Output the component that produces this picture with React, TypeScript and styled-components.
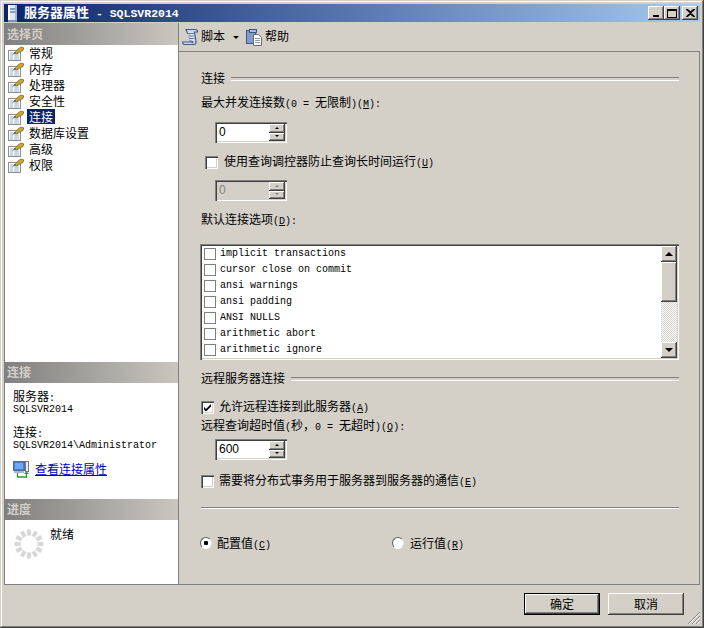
import React from "react";
import styled, { createGlobalStyle } from "styled-components";

const Global = createGlobalStyle`
  html, body { margin: 0; padding: 0; background: #d4d0c8; }
  * { box-sizing: border-box; }
  u { text-decoration: underline; text-underline-offset: 1px; }
`;

const CJK = `"Noto Sans CJK SC", "Liberation Sans", sans-serif`;

const Lat = styled.span`
  font-family: "Liberation Mono", monospace;
  font-size: 10px;
  white-space: pre;
`;

function Mixed({ text }: { text: string }) {
  const runs = text.split(/([\x00-\x7f]+)/).filter(Boolean);
  return (
    <>
      {runs.map((r, i) => {
        if (!/^[\x00-\x7f]+$/.test(r)) return <React.Fragment key={i}>{r}</React.Fragment>;
        const parts = r.split(/\(([A-Z])\)/);
        return (
          <Lat key={i}>
            {parts.map((p, j) =>
              j % 2 ? (
                <React.Fragment key={j}>
                  (<u>{p}</u>)
                </React.Fragment>
              ) : (
                <React.Fragment key={j}>{p}</React.Fragment>
              )
            )}
          </Lat>
        );
      })}
    </>
  );
}

const Window = styled.div`
  position: relative;
  width: 704px;
  height: 628px;
  padding: 4px;
  background: #d4d0c8;
  display: flex;
  flex-direction: column;
  font-family: ${CJK};
  font-size: 12px;
  line-height: 16px;
  color: #000;
  overflow: hidden;
  box-shadow: inset -1px -1px 0 #404040, inset 1px 1px 0 #d4d0c8, inset -2px -2px 0 #808080, inset 2px 2px 0 #fff;
`;

const TitleBar = styled.div`
  height: 18px;
  flex: none;
  margin-bottom: 1px;
  padding: 0 2px 0 3px;
  display: flex;
  align-items: center;
  background: linear-gradient(90deg, #0a246a, #a6caf0);
  color: #fff;
  font-weight: 700;
  font-size: 13px;
`;

const TitleText = styled.span`
  margin-left: 6px;
  flex: 1;
  white-space: pre;
  ${Lat} {
    font-size: 11.5px;
    font-weight: 700;
  }
`;

const WinButton = styled.button<{ $gap?: number }>`
  width: 16px;
  height: 14px;
  padding: 0;
  margin-left: ${(p) => p.$gap ?? 0}px;
  border: 0;
  background: #d4d0c8;
  display: flex;
  align-items: center;
  justify-content: center;
  box-shadow: inset -1px -1px 0 #404040, inset 1px 1px 0 #fff, inset -2px -2px 0 #808080;
`;

const Body = styled.div`
  height: 562px;
  flex: none;
  display: flex;
  border-left: 1px solid #808080;
  border-bottom: 1px solid #808080;
`;

const Side = styled.aside`
  width: 174px;
  flex: none;
  background: #fff;
  border-right: 1px solid #808080;
  display: flex;
  flex-direction: column;
`;

const SideHeader = styled.div<{ $h: number }>`
  height: ${(p) => p.$h}px;
  flex: none;
  padding: 0 0 1px 2px;
  display: flex;
  align-items: center;
  background: linear-gradient(90deg, #808080, #c9c6be);
  color: #d4d0c8;
  font-weight: 700;
`;

const PageList = styled.ul`
  list-style: none;
  margin: 0;
  padding: 0 0 0 3px;
  height: 317px;
  flex: none;
`;

const PageItem = styled.li`
  height: 16px;
  display: flex;
  align-items: center;
`;

const PageName = styled.span<{ $active?: boolean }>`
  margin: -2px 0 0 ${(p) => (p.$active ? 3 : 5)}px;
  padding: 0 ${(p) => (p.$active ? 2 : 0)}px;
  height: 15px;
  line-height: 15px;
  background: ${(p) => (p.$active ? "#0a246a" : "transparent")};
  color: ${(p) => (p.$active ? "#fff" : "#000")};
`;

const ConnInfo = styled.div`
  height: 116px;
  flex: none;
  padding: 7px 0 0 8px;
  line-height: 12px;
`;

const ConnLine = styled.div<{ $gap?: number }>`
  height: 12px;
  margin-top: ${(p) => p.$gap ?? 0}px;
  white-space: pre;
`;

const LinkRow = styled.div`
  display: flex;
  align-items: center;
  height: 16px;
  margin-top: 12px;
`;

const LinkText = styled.a`
  margin-left: 5px;
  color: #0000c8;
  text-decoration: underline;
`;

const Progress = styled.div`
  flex: 1;
  padding: 9px 0 0 9px;
  display: flex;
  align-items: flex-start;
`;

const ProgressText = styled.span`
  margin: -3px 0 0 6px;
`;

const Main = styled.main`
  flex: 1;
  min-width: 0;
  display: flex;
  flex-direction: column;
`;

const Toolbar = styled.div`
  height: 28px;
  flex: none;
  padding-left: 3px;
  display: flex;
  align-items: center;
`;

const ToolText = styled.span`
  margin: 0 0 2px 2px;
`;

const DropArrow = styled.span`
  width: 0;
  height: 0;
  margin: 1px 7px 0 8px;
  border-left: 3px solid transparent;
  border-right: 3px solid transparent;
  border-top: 3px solid #000;
`;

const Content = styled.div`
  flex: 1;
  margin-right: 0;
  padding: 18px 20px 0 22px;
  border-top: 1px solid #808080;
  border-right: 1px solid #808080;
  width: 521px;
`;

const GroupTitle = styled.div<{ $mt?: number }>`
  display: flex;
  align-items: center;
  height: 16px;
  margin-top: ${(p) => p.$mt ?? 0}px;
  &::after {
    content: "";
    flex: 1;
    margin: 2px 0 0 6px;
    height: 2px;
    border-top: 1px solid #808080;
    border-bottom: 1px solid #fff;
  }
`;

const Label = styled.div<{ $mt: number }>`
  height: 16px;
  margin-top: ${(p) => p.$mt}px;
  white-space: pre;
`;

const Spin = styled.div<{ $mt: number; $disabled?: boolean }>`
  width: 72px;
  height: 21px;
  margin: ${(p) => p.$mt}px 0 0 14px;
  padding: 2px;
  display: flex;
  background: ${(p) => (p.$disabled ? "#d4d0c8" : "#fff")};
  color: ${(p) => (p.$disabled ? "#808080" : "#000")};
  box-shadow: inset 1px 1px 0 #808080, inset 2px 2px 0 #404040, inset -1px -1px 0 #fff, inset -2px -2px 0 #d4d0c8;
`;

const SpinValue = styled.span`
  flex: 1;
  padding-left: 2px;
  line-height: 17px;
  font-family: "Liberation Sans", sans-serif;
  font-size: 12px;
`;

const SpinButtons = styled.span`
  width: 16px;
  display: flex;
  flex-direction: column;
`;

const SpinBtn = styled.span<{ $dir: "up" | "down"; $disabled?: boolean }>`
  flex: 1;
  background: #d4d0c8;
  display: flex;
  align-items: center;
  justify-content: center;
  box-shadow: inset -1px -1px 0 #404040, inset 1px 1px 0 #fff, inset -2px -2px 0 #808080;
  &::after {
    content: "";
    width: 0;
    height: 0;
    margin-top: -1px;
    border-left: 2px solid transparent;
    border-right: 2px solid transparent;
    ${(p) => {
      const c = p.$disabled ? "#808080" : "#000";
      return p.$dir === "up" ? `border-bottom: 2px solid ${c};` : `border-top: 2px solid ${c};`;
    }}
  }
`;

const CheckRow = styled.label<{ $mt: number; $ml: number; $gap: number }>`
  height: 16px;
  display: flex;
  align-items: center;
  margin: ${(p) => p.$mt}px 0 0 ${(p) => p.$ml}px;
  gap: ${(p) => p.$gap}px;
  white-space: pre;
`;

const Box = styled.span`
  width: 13px;
  height: 13px;
  flex: none;
  background: #fff;
  display: flex;
  box-shadow: inset 1px 1px 0 #808080, inset 2px 2px 0 #404040, inset -1px -1px 0 #fff, inset -2px -2px 0 #d4d0c8;
`;

const ListBox = styled.div`
  height: 116px;
  margin: 17px 0 0 -1px;
  padding: 2px;
  display: flex;
  background: #fff;
  box-shadow: inset 1px 1px 0 #808080, inset 2px 2px 0 #404040, inset -1px -1px 0 #fff, inset -2px -2px 0 #d4d0c8;
`;

const Options = styled.div`
  flex: 1;
  padding: 0 0 0 2px;
  overflow: hidden;
`;

const OptionRow = styled.div`
  height: 16px;
  display: flex;
  align-items: center;
  gap: 4px;
  font-family: "Liberation Mono", monospace;
  font-size: 10px;
  white-space: pre;
`;

const OptionBox = styled.span`
  width: 12px;
  height: 12px;
  margin-top: -1px;
  flex: none;
  background: #fff;
  border: 1px solid #808080;
`;

const Scrollbar = styled.div`
  width: 16px;
  display: flex;
  flex-direction: column;
  background: repeating-conic-gradient(#d4d0c8 0 25%, #fff 0 50%) 0 0 / 2px 2px;
`;

const ScrollBtn = styled.div<{ $h: number }>`
  height: ${(p) => p.$h}px;
  flex: none;
  background: #d4d0c8;
  display: flex;
  align-items: center;
  justify-content: center;
  box-shadow: inset -1px -1px 0 #404040, inset 1px 1px 0 #fff, inset -2px -2px 0 #808080;
`;

const ScrollArrow = styled.span<{ $dir: "up" | "down" }>`
  width: 0;
  height: 0;
  border-left: 4px solid transparent;
  border-right: 4px solid transparent;
  ${(p) => (p.$dir === "up" ? "border-bottom: 4px solid #000;" : "border-top: 4px solid #000;")}
`;

const ScrollFill = styled.div`
  flex: 1;
`;

const Separator = styled.div`
  height: 2px;
  margin-top: 18px;
  border-top: 1px solid #808080;
  border-bottom: 1px solid #fff;
`;

const RadioRow = styled.div`
  height: 16px;
  margin: 26px 0 0 -1px;
  display: flex;
  align-items: center;
`;

const RadioItem = styled.label<{ $w: number; $gap: number }>`
  width: ${(p) => p.$w}px;
  display: flex;
  align-items: center;
  gap: ${(p) => p.$gap}px;
  white-space: pre;
`;

const RadioLabel = styled.span`
  margin-top: 2px;
`;

const RadioDot = styled.span<{ $on?: boolean }>`
  width: 12px;
  height: 12px;
  flex: none;
  border-radius: 50%;
  background: ${(p) => (p.$on ? "radial-gradient(circle, #000 0 2px, #fff 2.5px)" : "#fff")};
  border: 1px solid;
  border-color: #606060 #e8e8e8 #fff #606060;
`;

const Footer = styled.footer`
  flex: 1;
  padding: 8px 16px 0 0;
  display: flex;
  justify-content: flex-end;
  gap: 8px;
`;

const DialogBtn = styled.button<{ $default?: boolean }>`
  width: 76px;
  height: 22px;
  padding: 0;
  border: ${(p) => (p.$default ? "1px solid #000" : "0")};
  background: #d4d0c8;
  font: inherit;
  color: #000;
  box-shadow: inset -1px -1px 0 #404040, inset 1px 1px 0 #fff, inset -2px -2px 0 #808080;
`;

const Grip = styled.svg`
  position: absolute;
  right: 3px;
  bottom: 3px;
`;

const PageIcon = () => (
  <svg width="16" height="15" viewBox="0 0 16 15">
    <rect x="0.5" y="4.5" width="12" height="10" fill="#fff" stroke="#8f8f88" />
    <path d="M2 7h3M2 9h3M2 11h3M2 13h3M6 7h5M6 9h5M6 11h5M6 13h5" stroke="#9ab0cc" />
    <path d="M6.500 7L10 3L13 1L16 2L15 4.500L11 6.500L8.500 8Z" fill="#c8a838" stroke="#6e5a18" strokeWidth="0.7" />
    <path d="M5 8.500L7.500 6" stroke="#303030" />
  </svg>
);

const ScriptIcon = () => (
  <svg width="17" height="18" viewBox="0 0 17 18">
    <path
      d="M3.500 1.500H13.500C15 1.500 16 2.700 15.500 4H12.500L14 13C14.300 15 13.500 16.500 12 16.500H2.500C1.200 16.500.5 15.300.8 14H9.500C10 15 11 15 10.800 13.500L9 5.500H5.500C5 3 4.500 2 3.500 1.500Z"
      fill="#c9d8ee"
      stroke="#3f5c8c"
      strokeWidth="1.200"
    />
    <path d="M5.500 4.500H12V13H9.500L8 5.500Z" fill="#dde7f6" />
    <path d="M5.500 5.500H12M6.500 8H12M7 10.500H12.500M7 13H10" stroke="#5c7aa6" />
  </svg>
);

const HelpIcon = () => (
  <svg width="17" height="17" viewBox="0 0 17 17">
    <rect x="0.5" y="1.500" width="9" height="13" fill="#7f9ccc" stroke="#3a5488" />
    <rect x="3.500" y="0.500" width="7" height="3" fill="#a9bedd" stroke="#3a5488" />
    <path d="M7.500 5.500h5l3 3v8h-8z" fill="#fff" stroke="#6a6a6a" />
    <path d="M9 9.500h5M9 11.500h5M9 13.500h5" stroke="#8a9ab8" />
  </svg>
);

const ServerIcon = () => (
  <svg width="11" height="17" viewBox="0 0 11 17">
    <rect x="1" y="0" width="9" height="17" fill="#dfe8f4" />
    <rect x="1" y="0" width="2" height="17" fill="#fff" />
    <path d="M3 4h7M3 7h7" stroke="#2a4a88" />
    <rect x="8" y="0" width="2" height="17" fill="#9fb4d4" />
    <rect x="1" y="15" width="9" height="2" fill="#7a90b8" />
  </svg>
);

const NetIcon = () => (
  <svg width="17" height="17" viewBox="0 0 17 17">
    <rect x="0.500" y="0.500" width="11" height="9" fill="#3f7fe0" stroke="#5a6a88" />
    <rect x="2" y="2" width="8" height="6" fill="#6fa8f2" />
    <rect x="1" y="10" width="10" height="2" fill="#a8b8cc" />
    <rect x="12.500" y="0.500" width="3" height="10" fill="#e8ecf4" stroke="#7a7a7a" />
    <path d="M4.500 12v4h9v-4" fill="none" stroke="#2f962f" strokeWidth="1.300" />
    <path d="M11 13l2.500-2.500L16 13z" fill="#2f962f" />
  </svg>
);

const Ring = () => {
  const n = 12;
  return (
    <svg width="30" height="30" viewBox="0 0 30 30">
      {Array.from({ length: n }, (_, i) => (
        <rect
          key={i}
          x="13"
          y="0.500"
          width="4"
          height="6"
          fill="#d8d8d8"
          transform={`rotate(${(i * 360) / n} 15 15)`}
        />
      ))}
    </svg>
  );
};

const CheckMark = () => (
  <svg width="13" height="13" viewBox="0 0 13 13">
    <path d="M3 6l2 2 5-5v2.500l-5 5-2-2z" fill="#000" />
  </svg>
);

const pages = ["常规", "内存", "处理器", "安全性", "连接", "数据库设置", "高级", "权限"];
const options = [
  "implicit transactions",
  "cursor close on commit",
  "ansi warnings",
  "ansi padding",
  "ANSI NULLS",
  "arithmetic abort",
  "arithmetic ignore",
];

const Spinner = ({ value, mt, disabled }: { value: string; mt: number; disabled?: boolean }) => (
  <Spin $mt={mt} $disabled={disabled}>
    <SpinValue>{value}</SpinValue>
    <SpinButtons>
      <SpinBtn $dir="up" $disabled={disabled} />
      <SpinBtn $dir="down" $disabled={disabled} />
    </SpinButtons>
  </Spin>
);

export default function App() {
  return (
    <>
      <Global />
      <Window>
        <TitleBar>
          <ServerIcon />
          <TitleText>
            <Mixed text="服务器属性 - SQLSVR2014" />
          </TitleText>
          <WinButton aria-label="最小化">
            <svg width="10" height="8" viewBox="0 0 10 8">
              <rect x="2" y="6" width="6" height="2" fill="#000" />
            </svg>
          </WinButton>
          <WinButton aria-label="最大化">
            <svg width="10" height="9" viewBox="0 0 10 9">
              <path d="M0 0h10v9H0z M1 2v6h8V2z" fill="#000" fillRule="evenodd" />
            </svg>
          </WinButton>
          <WinButton aria-label="关闭" $gap={2}>
            <svg width="9" height="8" viewBox="0 0 9 8">
              <path d="M0.500 0L4.500 3.500L8.500 0M0.500 8L4.500 4.500L8.500 8" fill="none" stroke="#000" strokeWidth="1.700" />
            </svg>
          </WinButton>
        </TitleBar>
        <Body>
          <Side>
            <SideHeader $h={22}>选择页</SideHeader>
            <PageList>
              {pages.map((p) => (
                <PageItem key={p}>
                  <PageIcon />
                  <PageName $active={p === "连接"}>{p}</PageName>
                </PageItem>
              ))}
            </PageList>
            <SideHeader $h={21}>连接</SideHeader>
            <ConnInfo>
              <ConnLine>
                <Mixed text="服务器:" />
              </ConnLine>
              <ConnLine $gap={-1}>
                <Lat>SQLSVR2014</Lat>
              </ConnLine>
              <ConnLine $gap={13}>
                <Mixed text="连接:" />
              </ConnLine>
              <ConnLine $gap={-1}>
                <Lat>SQLSVR2014\Administrator</Lat>
              </ConnLine>
              <LinkRow>
                <NetIcon />
                <LinkText>查看连接属性</LinkText>
              </LinkRow>
            </ConnInfo>
            <SideHeader $h={21}>进度</SideHeader>
            <Progress>
              <Ring />
              <ProgressText>就绪</ProgressText>
            </Progress>
          </Side>
          <Main>
            <Toolbar>
              <ScriptIcon />
              <ToolText>脚本</ToolText>
              <DropArrow />
              <HelpIcon />
              <ToolText>帮助</ToolText>
            </Toolbar>
            <Content>
              <GroupTitle>连接</GroupTitle>
              <Label $mt={8}>
                <Mixed text="最大并发连接数(0 = 无限制)(M):" />
              </Label>
              <Spinner value="0" mt={12} />
              <CheckRow $mt={11} $ml={4} $gap={6}>
                <Box />
                <span>
                  <Mixed text="使用查询调控器防止查询长时间运行(U)" />
                </span>
              </CheckRow>
              <Spinner value="0" mt={10} disabled />
              <Label $mt={10}>
                <Mixed text="默认连接选项(D):" />
              </Label>
              <ListBox>
                <Options>
                  {options.map((o) => (
                    <OptionRow key={o}>
                      <OptionBox />
                      {o}
                    </OptionRow>
                  ))}
                </Options>
                <Scrollbar>
                  <ScrollBtn $h={16}>
                    <ScrollArrow $dir="up" />
                  </ScrollBtn>
                  <ScrollBtn $h={40} />
                  <ScrollFill />
                  <ScrollBtn $h={16}>
                    <ScrollArrow $dir="down" />
                  </ScrollBtn>
                </Scrollbar>
              </ListBox>
              <GroupTitle $mt={10}>远程服务器连接</GroupTitle>
              <CheckRow $mt={13} $ml={0} $gap={5}>
                <Box>
                  <CheckMark />
                </Box>
                <span>
                  <Mixed text="允许远程连接到此服务器(A)" />
                </span>
              </CheckRow>
              <Label $mt={2}>
                <Mixed text="远程查询超时值(秒，0 = 无超时)(Q):" />
              </Label>
              <Spinner value="600" mt={6} />
              <CheckRow $mt={13} $ml={0} $gap={5}>
                <Box />
                <span>
                  <Mixed text="需要将分布式事务用于服务器到服务器的通信(E)" />
                </span>
              </CheckRow>
              <Separator />
              <RadioRow>
                <RadioItem $w={192} $gap={5}>
                  <RadioDot $on />
                  <RadioLabel>
                    <Mixed text="配置值(C)" />
                  </RadioLabel>
                </RadioItem>
                <RadioItem $w={120} $gap={6}>
                  <RadioDot />
                  <RadioLabel>
                    <Mixed text="运行值(R)" />
                  </RadioLabel>
                </RadioItem>
              </RadioRow>
            </Content>
          </Main>
        </Body>
        <Footer>
          <DialogBtn $default>确定</DialogBtn>
          <DialogBtn>取消</DialogBtn>
        </Footer>
        <Grip width="14" height="14" viewBox="0 0 14 14">
          <path d="M13 1L1 13M13 5L5 13M13 9L9 13" stroke="#808080" strokeWidth="1" />
          <path d="M13 2L2 13M13 6L6 13M13 10L10 13" stroke="#fff" strokeWidth="1" />
        </Grip>
      </Window>
    </>
  );
}
